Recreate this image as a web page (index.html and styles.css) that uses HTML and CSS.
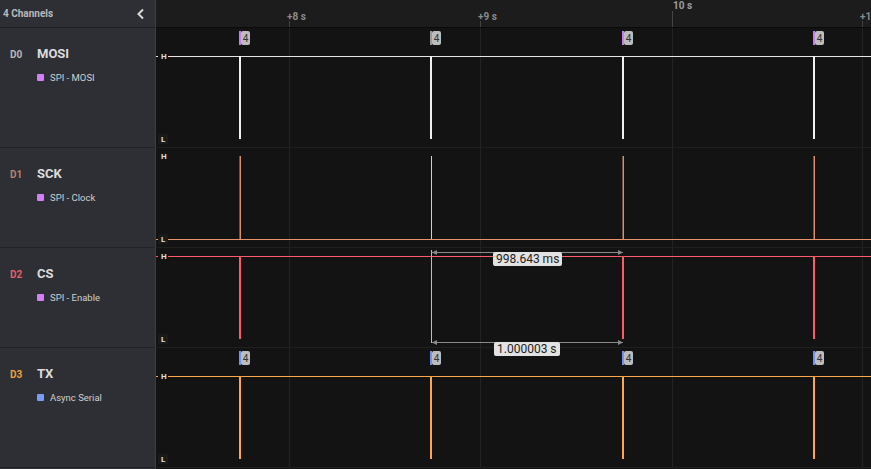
FILE: index.html
```html
<!DOCTYPE html>
<html>
<head>
<meta charset="utf-8">
<link rel="stylesheet" href="styles.css">
</head>
<body>
<div class="app">
  <aside class="sidebar">
    <div class="side-head">
      <span class="side-title">4 Channels</span>
      <svg class="chev" width="10" height="12" viewBox="0 0 10 12"><path d="M7 1.5 L2.5 6 L7 10.5" fill="none" stroke="#d8d8d8" stroke-width="2"/></svg>
    </div>
    <div class="ch ch-tall">
      <div class="ch-line"><span class="ch-id d0">D0</span><span class="ch-name">MOSI</span></div>
      <div class="ch-an"><span class="sq purple"></span>SPI - MOSI</div>
    </div>
    <div class="ch">
      <div class="ch-line"><span class="ch-id d1">D1</span><span class="ch-name">SCK</span></div>
      <div class="ch-an"><span class="sq purple"></span>SPI - Clock</div>
    </div>
    <div class="ch">
      <div class="ch-line"><span class="ch-id d2">D2</span><span class="ch-name">CS</span></div>
      <div class="ch-an"><span class="sq purple"></span>SPI - Enable</div>
    </div>
    <div class="ch ch-tall">
      <div class="ch-line"><span class="ch-id d3">D3</span><span class="ch-name">TX</span></div>
      <div class="ch-an"><span class="sq blue"></span>Async Serial</div>
    </div>
  </aside>
  <main class="main">
    <div class="ruler">
      <svg width="715" height="27" viewBox="0 0 715 27">
        <line x1="133.5" y1="21" x2="133.5" y2="27" stroke="#444"/>
        <line x1="324.5" y1="21" x2="324.5" y2="27" stroke="#444"/>
        <line x1="516.5" y1="11" x2="516.5" y2="27" stroke="#444"/>
        <line x1="706.5" y1="21" x2="706.5" y2="27" stroke="#444"/>
      </svg>
      <span class="tl" style="left:131px">+8 s</span>
      <span class="tl" style="left:322px">+9 s</span>
      <span class="tl major" style="left:517px">10 s</span>
      <span class="tl" style="left:704px">+1</span>
    </div>
    <div class="row row-tall">
      <svg width="715" height="119" viewBox="0 0 715 119">
        <g stroke="#232323"><line x1="133.5" y1="0" x2="133.5" y2="119"/><line x1="324.5" y1="0" x2="324.5" y2="119"/><line x1="516.5" y1="0" x2="516.5" y2="119"/><line x1="706.5" y1="0" x2="706.5" y2="119"/></g>
        <line x1="0" y1="28.5" x2="715" y2="28.5" stroke="#e6e6e6"/>
        <g stroke="#f0f0f0" stroke-width="2"><line x1="84" y1="28" x2="84" y2="111"/><line x1="275" y1="28" x2="275" y2="111"/><line x1="467" y1="28" x2="467" y2="111"/><line x1="658" y1="28" x2="658" y2="111"/></g>
        <g class="mk"><rect x="83" y="3" width="2" height="14" fill="#c77ee8"/><rect x="85" y="3" width="9" height="14" rx="2" fill="#bdbdbd"/><text x="89.5" y="14">4</text></g>
        <g class="mk"><rect x="274" y="3" width="2" height="14" fill="#9a9a9a"/><rect x="276" y="3" width="9" height="14" rx="2" fill="#bdbdbd"/><text x="280.5" y="14">4</text></g>
        <g class="mk"><rect x="466" y="3" width="2" height="14" fill="#c77ee8"/><rect x="468" y="3" width="9" height="14" rx="2" fill="#bdbdbd"/><text x="472.5" y="14">4</text></g>
        <g class="mk"><rect x="657" y="3" width="2" height="14" fill="#c77ee8"/><rect x="659" y="3" width="9" height="14" rx="2" fill="#bdbdbd"/><text x="663.5" y="14">4</text></g>
        <rect x="2" y="24" width="10" height="9" fill="#131313"/><text class="hl" x="5" y="31">H</text>
        <rect x="2" y="106" width="10" height="10" fill="#1a1a1a"/><text class="hl" x="5" y="114">L</text>
      </svg>
    </div>
    <div class="row">
      <svg width="715" height="99" viewBox="0 0 715 99">
        <g stroke="#232323"><line x1="133.5" y1="0" x2="133.5" y2="99"/><line x1="324.5" y1="0" x2="324.5" y2="99"/><line x1="516.5" y1="0" x2="516.5" y2="99"/><line x1="706.5" y1="0" x2="706.5" y2="99"/></g>
        <line x1="0" y1="91.5" x2="715" y2="91.5" stroke="#e8946a"/>
        <g stroke="#d98e6c" stroke-width="1.5"><line x1="84.25" y1="8" x2="84.25" y2="91"/><line x1="467.25" y1="8" x2="467.25" y2="91"/><line x1="658.25" y1="8" x2="658.25" y2="91"/></g>
        <line x1="275.5" y1="8" x2="275.5" y2="91" stroke="#cfcfcf"/>
        <rect x="2" y="4" width="10" height="9" fill="#131313"/><text class="hl" x="5" y="11">H</text>
        <rect x="2" y="86" width="10" height="10" fill="#1a1a1a"/><text class="hl" x="5" y="94">L</text>
      </svg>
    </div>
    <div class="row">
      <svg width="715" height="99" viewBox="0 0 715 99">
        <g stroke="#232323"><line x1="133.5" y1="0" x2="133.5" y2="99"/><line x1="324.5" y1="0" x2="324.5" y2="99"/><line x1="516.5" y1="0" x2="516.5" y2="99"/><line x1="706.5" y1="0" x2="706.5" y2="99"/></g>
        <line x1="0" y1="8.5" x2="715" y2="8.5" stroke="#ff5a6a"/>
        <g stroke="#ff5a6a" stroke-width="2"><line x1="84" y1="8" x2="84" y2="91"/><line x1="467" y1="8" x2="467" y2="91"/><line x1="658" y1="8" x2="658" y2="91"/></g>
        <line x1="275.5" y1="2" x2="275.5" y2="95" stroke="#bdbdbd"/>
        <g stroke="#8a8a8a" fill="#8a8a8a">
          <line x1="276" y1="4.5" x2="467" y2="4.5"/>
          <path d="M276 4.5 L281 2 L281 7 Z" stroke="none"/>
          <path d="M467 4.5 L462 2 L462 7 Z" stroke="none"/>
          <line x1="276" y1="94.5" x2="467" y2="94.5"/>
          <path d="M276 94.5 L281 92 L281 97 Z" stroke="none"/>
          <path d="M467 94.5 L462 92 L462 97 Z" stroke="none"/>
        </g>
        <rect x="2" y="4" width="10" height="9" fill="#131313"/><text class="hl" x="5" y="11">H</text>
        <rect x="2" y="86" width="10" height="10" fill="#1a1a1a"/><text class="hl" x="5" y="94">L</text>
      </svg>
      <span class="meas m1">998.643 ms</span>
      <span class="meas m2">1.000003 s</span>
    </div>
    <div class="row row-tall last">
      <svg width="715" height="119" viewBox="0 0 715 119">
        <g stroke="#232323"><line x1="133.5" y1="0" x2="133.5" y2="119"/><line x1="324.5" y1="0" x2="324.5" y2="119"/><line x1="516.5" y1="0" x2="516.5" y2="119"/><line x1="706.5" y1="0" x2="706.5" y2="119"/></g>
        <line x1="0" y1="28.5" x2="715" y2="28.5" stroke="#ffa64a"/>
        <g stroke="#ffa64a" stroke-width="2"><line x1="84" y1="28" x2="84" y2="111"/><line x1="275" y1="28" x2="275" y2="111"/><line x1="467" y1="28" x2="467" y2="111"/><line x1="658" y1="28" x2="658" y2="111"/></g>
        <g class="mk"><rect x="83" y="3" width="2" height="14" fill="#6f93f0"/><rect x="85" y="3" width="9" height="14" rx="2" fill="#bdbdbd"/><text x="89.5" y="14">4</text></g>
        <g class="mk"><rect x="274" y="3" width="2" height="14" fill="#6f93f0"/><rect x="276" y="3" width="9" height="14" rx="2" fill="#bdbdbd"/><text x="280.5" y="14">4</text></g>
        <g class="mk"><rect x="466" y="3" width="2" height="14" fill="#6f93f0"/><rect x="468" y="3" width="9" height="14" rx="2" fill="#bdbdbd"/><text x="472.5" y="14">4</text></g>
        <g class="mk"><rect x="657" y="3" width="2" height="14" fill="#6f93f0"/><rect x="659" y="3" width="9" height="14" rx="2" fill="#bdbdbd"/><text x="663.5" y="14">4</text></g>
        <rect x="2" y="24" width="10" height="9" fill="#131313"/><text class="hl" x="5" y="31">H</text>
        <rect x="2" y="106" width="10" height="10" fill="#1a1a1a"/><text class="hl" x="5" y="114">L</text>
      </svg>
    </div>
  </main>
</div>
</body>
</html>
```
FILE: styles.css
```css
* { box-sizing: border-box; }
html, body { margin: 0; padding: 0; }
body {
  width: 871px; height: 469px; overflow: hidden;
  background: #131313;
  font-family: Roboto, "Liberation Sans", sans-serif;
}
.app { display: flex; height: 469px; }
.sidebar {
  width: 156px; flex: none;
  background: #2e2f34;
  border-right: 1px solid #6a2a30;
  display: flex; flex-direction: column;
}
.side-head {
  height: 28px; flex: none;
  border-bottom: 1px solid #1e1f22;
  display: flex; align-items: center; justify-content: space-between;
  padding: 0 9px 0 3px;
}
.side-title { font-size: 10px; font-weight: 700; color: #b9b9bc; }
.chev { display: block; }
.ch {
  height: 100px; flex: none;
  border-bottom: 1px solid #222327;
  padding: 18px 0 0 10px;
}
.ch-tall { height: 120px; }
.ch-line { display: flex; align-items: baseline; }
.ch-id { width: 27px; font-size: 10px; font-weight: 700; }
.d0 { color: #b8b8b8; }
.d1 { color: #b4846e; }
.d2 { color: #e0606c; }
.d3 { color: #eca03e; }
.ch-name { font-size: 13px; font-weight: 700; color: #dcdcdc; }
.ch-an {
  margin: 11px 0 0 27px;
  display: flex; align-items: center;
  font-size: 9.5px; color: #cfcfcf;
}
.sq { width: 7px; height: 7px; border-radius: 1px; margin-right: 6px; }
.purple { background: #d67ef5; }
.blue { background: #7a9cf5; }
.main { flex: 1; display: flex; flex-direction: column; min-width: 0; }
.ruler {
  height: 28px; flex: none; position: relative;
  background: #1c1c1c;
  border-bottom: 1px solid #0a0a0a;
}
.ruler svg { position: absolute; left: 0; top: 0; display: block; }
.tl {
  position: absolute; top: 11px;
  font-size: 10px; font-weight: 700; color: #8a8a8a;
}
.tl.major { top: 0; color: #9e9e9e; }
.row {
  height: 100px; flex: none; position: relative;
  background: #131313;
  border-bottom: 1px solid #1f1f1f;
}
.row-tall { height: 120px; }
.row svg { display: block; }
.mk text { font-size: 10px; fill: #333; text-anchor: middle; font-family: Roboto, sans-serif; }
.hl { font-size: 8px; font-weight: 700; fill: #e0e0e0; font-family: Roboto, sans-serif; }
.meas {
  position: absolute; z-index: 2;
  background: #e2e2e2; color: #222;
  font-size: 12px; line-height: 14px;
  padding: 0 3px; border-radius: 2px;
}
.m1 { left: 337px; top: 4px; }
.m2 { left: 338px; top: 94px; }
```
